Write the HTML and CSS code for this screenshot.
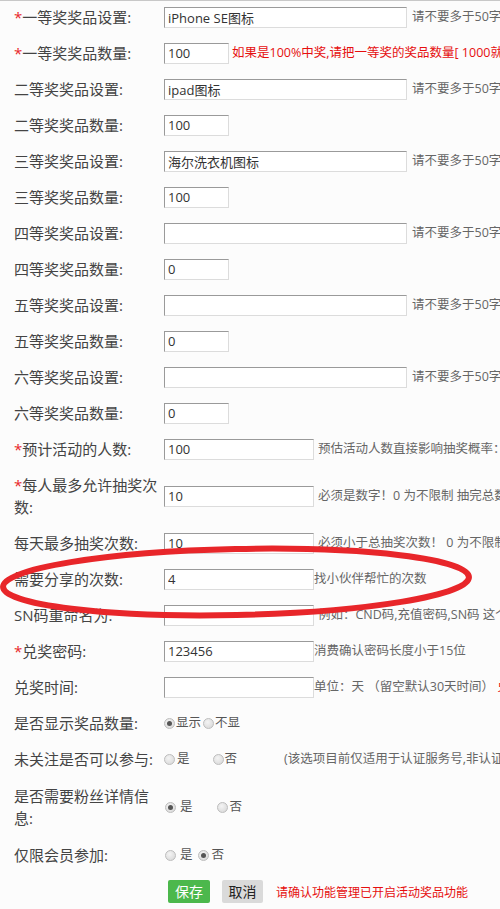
FILE: index.html
```html
<!DOCTYPE html>
<html lang="zh-CN">
<head>
<meta charset="utf-8">
<title>奖品设置</title>
<link rel="stylesheet" href="styles.css">
</head>
<body>
<div class="topbar"></div>
<form class="form">
  <div class="row first"><div class="lbl"><span class="req">*</span>一等奖奖品设置:</div><div class="ctl"><input class="ipt lg" value="iPhone SE图标"><span class="tip tl">请不要多于50字以内</span></div></div>
  <div class="row"><div class="lbl"><span class="req">*</span>一等奖奖品数量:</div><div class="ctl"><input class="ipt sm" value="100"><span class="tip red ts">如果是100%中奖,请把一等奖的奖品数量[ 1000就代表一千个奖品]</span></div></div>
  <div class="row"><div class="lbl">二等奖奖品设置:</div><div class="ctl"><input class="ipt lg" value="ipad图标"><span class="tip tl">请不要多于50字以内</span></div></div>
  <div class="row"><div class="lbl">二等奖奖品数量:</div><div class="ctl"><input class="ipt sm" value="100"></div></div>
  <div class="row"><div class="lbl">三等奖奖品设置:</div><div class="ctl"><input class="ipt lg" value="海尔洗衣机图标"><span class="tip tl">请不要多于50字以内</span></div></div>
  <div class="row"><div class="lbl">三等奖奖品数量:</div><div class="ctl"><input class="ipt sm" value="100"></div></div>
  <div class="row"><div class="lbl">四等奖奖品设置:</div><div class="ctl"><input class="ipt lg" value=""><span class="tip tl">请不要多于50字以内</span></div></div>
  <div class="row"><div class="lbl">四等奖奖品数量:</div><div class="ctl"><input class="ipt sm" value="0"></div></div>
  <div class="row"><div class="lbl">五等奖奖品设置:</div><div class="ctl"><input class="ipt lg" value=""><span class="tip tl">请不要多于50字以内</span></div></div>
  <div class="row"><div class="lbl">五等奖奖品数量:</div><div class="ctl"><input class="ipt sm" value="0"></div></div>
  <div class="row"><div class="lbl">六等奖奖品设置:</div><div class="ctl"><input class="ipt lg" value=""><span class="tip tl">请不要多于50字以内</span></div></div>
  <div class="row"><div class="lbl">六等奖奖品数量:</div><div class="ctl"><input class="ipt sm" value="0"></div></div>
  <div class="row"><div class="lbl"><span class="req">*</span>预计活动的人数:</div><div class="ctl"><input class="ipt md" value="100"><span class="tip tm">预估活动人数直接影响抽奖概率：中奖概率 = 奖品总数/(预估活动人数*每人抽奖次数)</span></div></div>
  <div class="row"><div class="lbl"><span class="req">*</span>每人最多允许抽奖次数:</div><div class="ctl"><input class="ipt md" value="10"><span class="tip tm">必须是数字！0 为不限制 抽完总数后将无法再抽</span></div></div>
  <div class="row"><div class="lbl">每天最多抽奖次数:</div><div class="ctl"><input class="ipt md" value="10"><span class="tip tm">必须小于总抽奖次数！ 0 为不限制</span></div></div>
  <div class="row"><div class="lbl">需要分享的次数:</div><div class="ctl"><input class="ipt md" value="4"><span class="tip">找小伙伴帮忙的次数</span></div></div>
  <div class="row"><div class="lbl">SN码重命名为:</div><div class="ctl"><input class="ipt md" value=""><span class="tip tm">例如：CND码,充值密码,SN码 这个是显示给用户看的</span></div></div>
  <div class="row"><div class="lbl"><span class="req">*</span>兑奖密码:</div><div class="ctl"><input class="ipt md" value="123456"><span class="tip">消费确认密码长度小于15位</span></div></div>
  <div class="row"><div class="lbl">兑奖时间:</div><div class="ctl"><input class="ipt md" value=""><span class="tip">单位：天 （留空默认30天时间） <span class="red">兑奖时间过期后不能兑奖</span></span></div></div>
  <div class="row"><div class="lbl">是否显示奖品数量:</div><div class="ctl"><span class="rd on"></span><span class="rt m1">显示</span><span class="rd m2"></span><span class="rt m1">不显</span></div></div>
  <div class="row"><div class="lbl">未关注是否可以参与:</div><div class="ctl"><span class="rd"></span><span class="rt m2">是</span><span class="rd g23"></span><span class="rt m1">否</span><span class="tip g47">(该选项目前仅适用于认证服务号,非认证服务号请选择是)</span></div></div>
  <div class="row tall"><div class="lbl">是否需要粉丝详情信息:</div><div class="ctl"><span class="rd on m1"></span><span class="rt m4">是</span><span class="rd g24"></span><span class="rt m2">否</span></div></div>
  <div class="row"><div class="lbl">仅限会员参加:</div><div class="ctl"><span class="rd m1"></span><span class="rt m4">是</span><span class="rd on m5"></span><span class="rt m3">否</span></div></div>
  <div class="btnrow">
    <button type="button" class="btn save">保存</button>
    <button type="button" class="btn cancel">取消</button>
    <span class="note">请确认功能管理已开启活动奖品功能</span>
  </div>
</form>
<svg class="mark" width="500" height="909" viewBox="0 0 500 909" aria-hidden="true">
  <ellipse cx="236" cy="582" rx="233" ry="33" fill="none" stroke="#e8262a" stroke-width="6" transform="rotate(-1.2 236 582)"/>
</svg>
</body>
</html>
```
FILE: styles.css
```css
html, body {
  margin: 0;
  padding: 0;
  overflow: hidden;
}
body {
  position: relative;
  width: 500px;
  height: 909px;
  background: #fcfcfc;
  font-family: "Open Sans", "Noto Sans CJK SC", sans-serif;
  color: #444;
}
.topbar {
  height: 1px;
  background: #c8c8c8;
}
.form {
  margin: 0;
}
.row {
  display: flex;
  align-items: center;
  padding: 7px 0;
}
.row.first {
  padding-top: 5px;
}
.row.tall {
  padding: 8px 0;
}
.lbl {
  flex: 0 0 150px;
  box-sizing: border-box;
  padding-left: 14px;
  width: 164px;
  flex-basis: 164px;
  font-size: 15px;
  line-height: 22px;
  color: #444;
}
.req {
  color: #e8262a;
}
.ctl {
  flex: 1 1 auto;
  min-width: 0;
  display: flex;
  align-items: center;
  white-space: nowrap;
}
.ipt {
  box-sizing: border-box;
  height: 21px;
  margin: 0;
  padding: 0 3px;
  border: 1px solid;
  border-color: #9a9a9a #dcdcdc #dcdcdc #9a9a9a;
  background: #fff;
  font-family: "Open Sans", "Noto Sans CJK SC", sans-serif;
  font-size: 13px;
  color: #333;
  flex: 0 0 auto;
  outline: none;
}
.ipt.lg { width: 243px; }
.ipt.sm { width: 65px; }
.ipt.md { width: 150px; }
.tip {
  font-size: 12.5px;
  color: #666;
  line-height: 22px;
}
.tl { margin-left: 5px; }
.ts { margin-left: 3px; }
.tm { margin-left: 4px; }
.red { color: #e60f0f; }
.rd {
  flex: 0 0 auto;
  box-sizing: border-box;
  width: 11px;
  height: 11px;
  border-radius: 50%;
  border: 1px solid #bdbdbd;
  background: radial-gradient(circle at 40% 35%, #f4f4f4 0%, #dedede 70%, #d2d2d2 100%);
  position: relative;
}
.rd.on::after {
  content: "";
  position: absolute;
  left: 2px;
  top: 2px;
  width: 5px;
  height: 5px;
  border-radius: 50%;
  background: #555;
}
.rt {
  font-size: 12.5px;
  color: #555;
  line-height: 22px;
}
.m1 { margin-left: 1px; }
.m2 { margin-left: 2px; }
.m3 { margin-left: 3px; }
.m4 { margin-left: 4px; }
.m5 { margin-left: 5px; }
.g23 { margin-left: 23px; }
.g24 { margin-left: 24px; }
.g47 { margin-left: 47px; }
.btnrow {
  display: flex;
  align-items: center;
  padding: 7px 0 0 168px;
}
.btn {
  box-sizing: border-box;
  height: 23px;
  width: 42px;
  margin: 0;
  padding: 0;
  border: 0;
  border-radius: 2px;
  font-family: "Noto Sans CJK SC", sans-serif;
  font-size: 14px;
  line-height: 23px;
}
.btn.save {
  background: #4cb84c;
  color: #fff;
}
.btn.cancel {
  margin-left: 12px;
  width: 41px;
  background: #dadada;
  color: #222;
}
.note {
  margin-left: 13px;
  font-size: 12px;
  color: #e60f0f;
  white-space: nowrap;
}
.mark {
  position: absolute;
  left: 0;
  top: 0;
  pointer-events: none;
}
```
